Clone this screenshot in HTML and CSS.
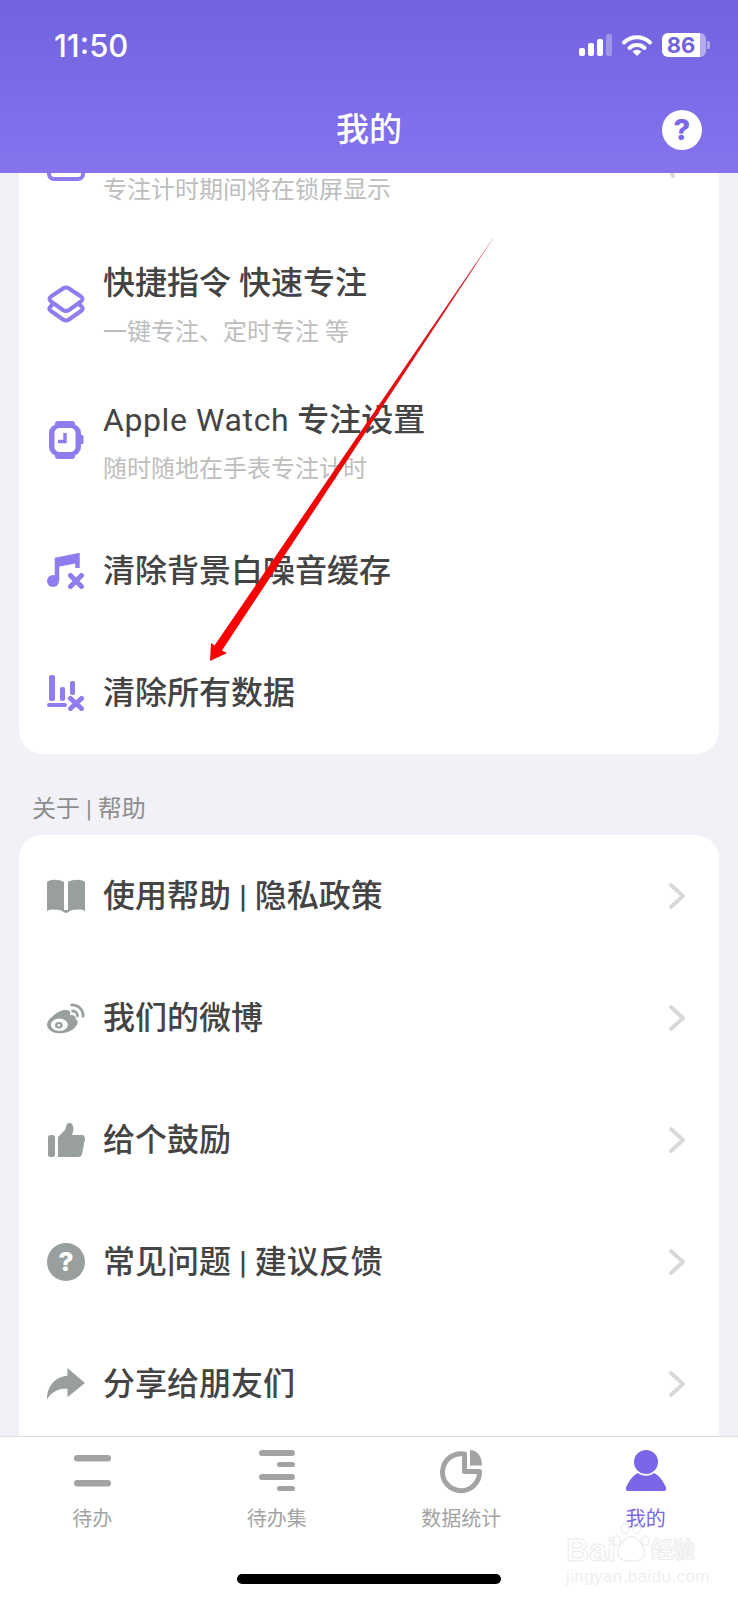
FILE: index.html
```html
<!DOCTYPE html>
<html lang="zh-CN">
<head>
    <meta charset="UTF-8">
    <meta name="viewport" content="width=device-width, initial-scale=1.0">
    <title>我的</title>
    <link rel="stylesheet" href="styles.css">
</head>
<body>
    <div class="page">
        <header class="app-header">
            <div class="status-bar">
                <span class="time">11:50</span>
                <div class="status-icons">
                    <div class="signal">
                        <i class="bar bar-1"></i><i class="bar bar-2"></i><i class="bar bar-3"></i><i class="bar bar-4"></i>
                    </div>
                    <svg class="wifi" viewBox="0 0 30 22"><path d="M2 8.500a19 19 0 0 1 26 0" fill="none" stroke="#fff" stroke-width="4" stroke-linecap="round"/><path d="M7.500 14a11 11 0 0 1 15 0" fill="none" stroke="#fff" stroke-width="4" stroke-linecap="round"/><path d="M10.500 17.500a7 7 0 0 1 9 0L15 22z" fill="#fff"/></svg>
                    <div class="battery">
                        <div class="battery-body"><span class="battery-level">86</span></div>
                        <i class="battery-cap"></i>
                    </div>
                </div>
            </div>
            <div class="title-bar">
                <span></span>
                <h1>我的</h1>
                <span class="help-btn">?</span>
            </div>
        </header>

        <main class="content">
            <section class="card">
                <div class="row row-cut">
                    <svg class="icon icon-cut" viewBox="0 0 38 8"><path d="M2 -8V1a5 5 0 0 0 5 5H31a5 5 0 0 0 5-5V-8" fill="none" stroke="#8e7dee" stroke-width="4"/></svg>
                    <p class="row-sub">专注计时期间将在锁屏显示</p>
                    <svg class="chevron-cut" viewBox="0 0 18 5"><path d="M3 -2L5 3" fill="none" stroke="#d9d9d9" stroke-width="4" stroke-linecap="round"/></svg>
                </div>
                <div class="row row-double">
                    <svg class="icon icon-up" viewBox="0 0 38 38" fill="none" stroke="#8e7dee" stroke-width="4" stroke-linejoin="round" stroke-linecap="round"><path d="M16 3.500Q19 1.500 22 3.500L34 11.500Q37 14 34 16.500L22 25Q19 27 16 25L4 16.500Q1 14 4 11.500z"/><path d="M5 20L3.500 21.500Q1 24 4 26L16 34.500Q19 36.500 22 34.500L34 26Q37 24 34.500 21.500L33 20"/></svg>
                    <div class="row-text">
                        <p class="row-title">快捷指令 快速专注</p>
                        <p class="row-sub">一键专注、定时专注 等</p>
                    </div>
                </div>
                <div class="row row-double">
                    <svg class="icon icon-up" viewBox="0 0 38 38" fill="#8e7dee"><rect x="2" y="3" width="32" height="32" rx="9"/><rect x="8" y="0" width="20" height="6" rx="3"/><rect x="8" y="32" width="20" height="6" rx="3"/><rect x="33" y="14" width="3.500" height="9" rx="1.500"/><rect x="7.500" y="7" width="21" height="24" rx="5" fill="#fff"/><path d="M18 12V20.500H11" fill="none" stroke="#8e7dee" stroke-width="3.500"/></svg>
                    <div class="row-text">
                        <p class="row-title"><span class="latin">Apple Watch</span> 专注设置</p>
                        <p class="row-sub">随时随地在手表专注计时</p>
                    </div>
                </div>
                <div class="row">
                    <svg class="icon" viewBox="0 0 38 36"><circle cx="6" cy="28" r="6" fill="#8e7dee"/><path d="M10 28V6.500L30.500 2.500V15" fill="none" stroke="#8e7dee" stroke-width="4.500"/><path d="M10 8L31 4V10L10 14z" fill="#8e7dee"/><path d="M23.500 22.500L34.500 33.500M34.500 22.500L23.500 33.500" stroke="#8e7dee" stroke-width="5" stroke-linecap="round"/></svg>
                    <p class="row-title">清除背景白噪音缓存</p>
                </div>
                <div class="row">
                    <svg class="icon" viewBox="0 0 38 36" fill="#8e7dee"><rect x="2" y="0" width="6" height="26" rx="2"/><rect x="13" y="12" width="5" height="14" rx="2"/><rect x="23" y="6" width="5" height="14" rx="2"/><rect x="0" y="28" width="20" height="4" rx="2"/><path d="M23.500 23.500L34.500 33.500M34.500 23.500L23.500 33.500" stroke="#8e7dee" stroke-width="5" stroke-linecap="round"/></svg>
                    <p class="row-title">清除所有数据</p>
                </div>
            </section>

            <p class="section-label">关于 | 帮助</p>

            <section class="card card-last">
                <div class="row">
                    <svg class="icon" viewBox="0 0 38 34" fill="#999e9f"><path d="M0 3C3 0 12 0 17 3V33C12 30 4 30 0 32z"/><path d="M38 3C35 0 26 0 21 3V33C26 30 34 30 38 32z"/><path d="M16 31H22V33L19 34 16 33z"/></svg>
                    <p class="row-title">使用帮助 | 隐私政策</p>
                    <svg class="chevron" viewBox="0 0 18 28"><path d="M3 3L15 14 3 25" fill="none" stroke="#d9d9d9" stroke-width="4" stroke-linecap="round" stroke-linejoin="round"/></svg>
                </div>
                <div class="row">
                    <svg class="icon" viewBox="0 0 40 34"><path d="M6 15C13 8 22 7 24 10 25 12 24 14 24 14 28 13 31 15 30 18 33 19 33 23 30 26 26 31 19 33 13 33 6 33 0 29 0 24 0 21 2 18 6 15z" fill="#999e9f"/><ellipse cx="13" cy="24" rx="9" ry="6.500" fill="#fff"/><ellipse cx="12.500" cy="24.500" rx="4" ry="3.500" fill="#999e9f"/><circle cx="12.500" cy="24.500" r="1.300" fill="#fff"/><path d="M27 9.500A5 5 0 0 1 32 14.500M26 3A11.500 11.500 0 0 1 38 15" fill="none" stroke="#999e9f" stroke-width="3" stroke-linecap="round"/></svg>
                    <p class="row-title">我们的微博</p>
                    <svg class="chevron" viewBox="0 0 18 28"><path d="M3 3L15 14 3 25" fill="none" stroke="#d9d9d9" stroke-width="4" stroke-linecap="round" stroke-linejoin="round"/></svg>
                </div>
                <div class="row">
                    <svg class="icon" viewBox="0 0 38 34" fill="#999e9f"><rect x="1" y="12" width="7" height="22" rx="2.500"/><path d="M11 14L18 7C19 5 19 3 20 1 22-1 25 0 26 3 27 6 26 9 25 12H35C37 12 38 14 38 16L35 31C35 33 33 34 31 34H11z"/></svg>
                    <p class="row-title">给个鼓励</p>
                    <svg class="chevron" viewBox="0 0 18 28"><path d="M3 3L15 14 3 25" fill="none" stroke="#d9d9d9" stroke-width="4" stroke-linecap="round" stroke-linejoin="round"/></svg>
                </div>
                <div class="row">
                    <span class="icon round-help">?</span>
                    <p class="row-title">常见问题 | 建议反馈</p>
                    <svg class="chevron" viewBox="0 0 18 28"><path d="M3 3L15 14 3 25" fill="none" stroke="#d9d9d9" stroke-width="4" stroke-linecap="round" stroke-linejoin="round"/></svg>
                </div>
                <div class="row">
                    <svg class="icon" viewBox="0 0 39 32" fill="#999e9f"><path d="M39 15.500L21 0V8C8 9 0 19 0 32 5 24 12 21 21 21V30z"/></svg>
                    <p class="row-title">分享给朋友们</p>
                    <svg class="chevron" viewBox="0 0 18 28"><path d="M3 3L15 14 3 25" fill="none" stroke="#d9d9d9" stroke-width="4" stroke-linecap="round" stroke-linejoin="round"/></svg>
                </div>
            </section>
        </main>

        <nav class="tabbar">
            <div class="tabs">
                <div class="tab">
                    <svg class="tab-icon" viewBox="0 0 42 44" fill="#a3a3a3"><rect x="3" y="5" width="37" height="6.500" rx="3.250"/><rect x="3" y="30" width="37" height="6.500" rx="3.250"/></svg>
                    <span>待办</span>
                </div>
                <div class="tab">
                    <svg class="tab-icon" viewBox="0 0 42 44" fill="#a3a3a3"><rect x="3" y="0" width="36" height="6" rx="3"/><rect x="21" y="12" width="18" height="5" rx="2.500"/><rect x="3" y="24" width="36" height="6" rx="3"/><rect x="21" y="36" width="18" height="5" rx="2.500"/></svg>
                    <span>待办集</span>
                </div>
                <div class="tab">
                    <svg class="tab-icon" viewBox="0 0 42 44"><path d="M24.500 4V21.500H39.500A18.500 18.500 0 1 1 24.500 4Z" fill="none" stroke="#a3a3a3" stroke-width="5" stroke-linejoin="round"/><path d="M30 0C37 0 42 6 42 15.500H30z" fill="#a3a3a3"/></svg>
                    <span>数据统计</span>
                </div>
                <div class="tab tab-active">
                    <svg class="tab-icon" viewBox="0 0 42 44" fill="#7b66e8"><circle cx="21" cy="12" r="12"/><path d="M3 41H39C41 41 41.500 39 41 37.500 38 31 34 25 29 23 25 26.500 17 26.500 13 23 8 25 4 31 1 37.500 0.500 39 1 41 3 41Z"/></svg>
                    <span>我的</span>
                </div>
            </div>
            <div class="home-bar"></div>

            <div class="watermark">
                <div class="wm-brand">
                    <span class="wm-bai">Bai</span>
                    <svg class="wm-paw" viewBox="0 0 42 44" fill="none" stroke="#eeeeee" stroke-width="1.500"><ellipse cx="6" cy="20" rx="4" ry="5"/><ellipse cx="15" cy="7" rx="4" ry="5.500"/><ellipse cx="27" cy="7" rx="4" ry="5.500"/><ellipse cx="36" cy="20" rx="4" ry="5"/><path d="M21 16C13 16 4 30 8 37 12 43 30 43 34 37 38 30 29 16 21 16Z"/></svg>
                    <span class="wm-cn">经验</span>
                </div>
                <span class="wm-url">jingyan.baidu.com</span>
            </div>
        </nav>

        <svg class="arrow" viewBox="0 0 738 1600">
            <defs>
                <linearGradient id="arrowFade" gradientUnits="userSpaceOnUse" x1="493" y1="238" x2="210" y2="661">
                    <stop offset="0" stop-color="#d8303a" stop-opacity="0.4"/>
                    <stop offset="0.08" stop-color="#c91420" stop-opacity="0.9"/>
                    <stop offset="0.4" stop-color="#e60a0a"/>
                    <stop offset="1" stop-color="#fb0000"/>
                </linearGradient>
            </defs>
            <path d="M493.500 238L222 650.500 227 653 210 661 211 643 214.500 645.500 493 238z" fill="url(#arrowFade)"/>
        </svg>
    </div>
</body>
</html>
```

FILE: styles.css
```css
* {
    box-sizing: border-box;
}

body {
    margin: 0;
    font-family: Roboto, "Noto Sans CJK SC", sans-serif;
    background-color: #f1f1f7;
}

p, h1 {
    margin: 0;
}

.page {
    position: relative;
    display: flex;
    flex-direction: column;
    width: 738px;
    height: 1600px;
    overflow: hidden;
}

/* header */
.app-header {
    position: relative;
    height: 173px;
    padding-top: 24px;
    color: white;
    background: linear-gradient(180deg, #7162dd, #8674ef);
}

.status-bar {
    display: flex;
    justify-content: space-between;
    align-items: center;
    height: 42px;
    padding: 0 28px 0 54px;
}

.time {
    font-family: Inter, sans-serif;
    font-size: 31px;
    font-weight: 500;
}

.status-icons {
    display: flex;
    align-items: center;
    gap: 10px;
}

.signal {
    display: flex;
    align-items: flex-end;
    gap: 3px;
    height: 22px;
}

.bar {
    width: 6px;
    border-radius: 2px;
    background-color: white;
}

.bar-1 { height: 8px; }
.bar-2 { height: 13px; }
.bar-3 { height: 17px; }
.bar-4 { height: 22px; background-color: rgba(255, 255, 255, 0.3); }

.wifi {
    width: 30px;
    height: 22px;
}

.battery {
    display: flex;
    align-items: center;
    gap: 1px;
}

.battery-body {
    width: 44px;
    height: 24px;
    border-radius: 6px;
    overflow: hidden;
    background: linear-gradient(90deg, white 86%, rgba(255, 255, 255, 0.45) 86%);
}

.battery-level {
    display: block;
    width: 38px;
    font-family: Inter, sans-serif;
    font-size: 22px;
    font-weight: 700;
    line-height: 24px;
    text-align: center;
    color: #7162dd;
}

.battery-cap {
    width: 3px;
    height: 8px;
    border-radius: 0 2px 2px 0;
    background-color: rgba(255, 255, 255, 0.45);
}

.title-bar {
    display: grid;
    grid-template-columns: 1fr auto 1fr;
    align-items: center;
    height: 64px;
    margin-top: 32px;
    padding: 0 36px;
}

.title-bar h1 {
    font-size: 33px;
    font-weight: 500;
    line-height: 60px;
}

.help-btn {
    justify-self: end;
    width: 40px;
    height: 40px;
    border-radius: 50%;
    background-color: white;
    color: #7a68e6;
    font-family: Inter, sans-serif;
    font-size: 29px;
    font-weight: 800;
    line-height: 40px;
    text-align: center;
}

/* list */
.content {
    flex: 1;
    min-height: 0;
    overflow: hidden;
    padding: 0 19px;
}

.card {
    border-radius: 24px;
    background-color: white;
}

.content > .card:first-child {
    border-radius: 0 0 24px 24px;
}

.card-last {
    padding-bottom: 40px;
}

.row {
    display: flex;
    align-items: center;
    gap: 18px;
    height: 122px;
    padding: 0 33px 0 28px;
}

.row-double {
    height: 136.5px;
}

.row-cut {
    align-items: flex-start;
    height: 64px;
}

.icon {
    flex: none;
    width: 38px;
    height: auto;
}

.icon-up {
    margin-bottom: 3px;
}

.icon-cut {
    height: 8px;
}

.row-title {
    flex: 1;
    font-size: 32px;
    font-weight: 500;
    line-height: 44px;
    color: #444;
}

.latin {
    font-weight: 400;
    letter-spacing: 0.6px;
}

.row-sub {
    flex: 1;
    font-size: 24px;
    line-height: 34px;
    color: #bdbdbd;
}

.row-text {
    flex: 1;
}

.row-text .row-sub {
    margin-top: 10px;
}

.chevron {
    flex: none;
    width: 18px;
    height: 28px;
}

.chevron-cut {
    flex: none;
    width: 18px;
    height: 5px;
}

.round-help {
    width: 38px;
    height: 38px;
    border-radius: 50%;
    background-color: #999e9f;
    color: white;
    font-family: Inter, sans-serif;
    font-size: 26px;
    font-weight: 800;
    line-height: 38px;
    text-align: center;
}

.section-label {
    padding: 38px 0 9px 13px;
    font-size: 24px;
    line-height: 34px;
    color: #8e8e8e;
}

/* bottom tabs */
.tabbar {
    position: relative;
    height: 164px;
    border-top: 1px solid #dedede;
    background-color: #fff;
}

.tabs {
    display: grid;
    grid-template-columns: repeat(4, 1fr);
    padding-top: 13px;
}

.tab {
    display: flex;
    flex-direction: column;
    align-items: center;
    gap: 11px;
    font-size: 20px;
    line-height: 28px;
    color: #a3a3a3;
}

.tab-icon {
    width: 42px;
    height: 44px;
}

.tab-active {
    color: #7b66e8;
}

.home-bar {
    width: 264px;
    height: 10px;
    margin: 41px auto 0;
    border-radius: 5px;
    background-color: black;
}

/* faint stamp over the bottom right corner */
.watermark {
    position: absolute;
    top: 84px;
    left: 566px;
    width: 134px;
    pointer-events: none;
}

.wm-brand {
    display: flex;
    align-items: flex-end;
    color: white;
    font-family: "Liberation Sans", "Noto Sans CJK SC", sans-serif;
    font-weight: 700;
    -webkit-text-stroke: 1px #ebebeb;
    white-space: nowrap;
}

.wm-bai {
    width: 45px;
    font-size: 32px;
    line-height: 28px;
}

.wm-cn {
    font-size: 22px;
    line-height: 28px;
}

.wm-paw {
    width: 40px;
    height: 43px;
    flex: none;
}

.wm-url {
    display: block;
    margin-top: 4px;
    font-family: "Liberation Sans", sans-serif;
    font-size: 17px;
    letter-spacing: 0.4px;
    line-height: 18px;
    color: #efefef;
    white-space: nowrap;
}

/* annotation over the screenshot */
.arrow {
    position: absolute;
    top: 0;
    left: 0;
    width: 738px;
    height: 1600px;
    pointer-events: none;
}
```
